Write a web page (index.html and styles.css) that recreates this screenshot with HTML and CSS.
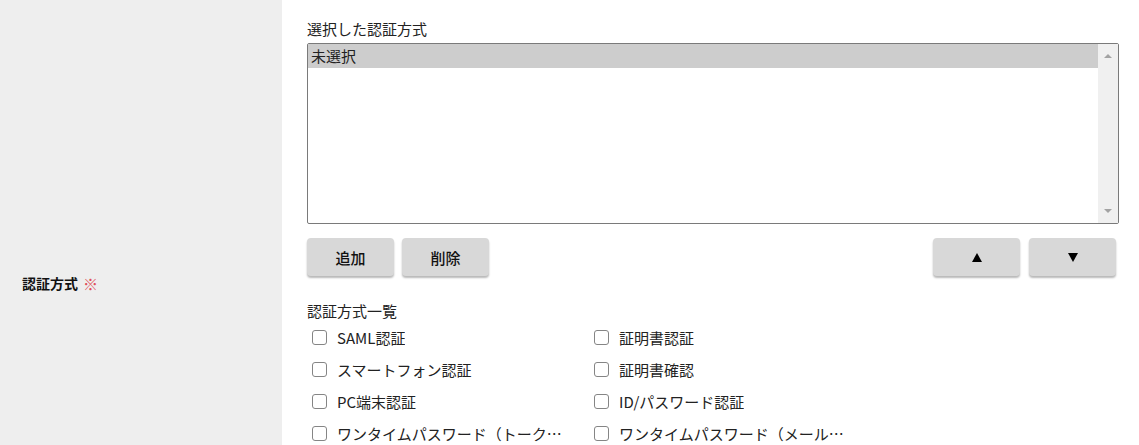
FILE: index.html
```html
<!DOCTYPE html>
<html lang="ja">
<head>
<meta charset="utf-8">
<title>認証方式</title>
<link rel="stylesheet" href="styles.css">
</head>
<body>
<div class="form-row">
  <div class="label-cell">
    <span class="label-text">認証方式</span><span class="required">※</span>
  </div>
  <div class="field-cell">
    <div class="field-title">選択した認証方式</div>
    <div class="listbox">
      <div class="options">
        <div class="option selected">未選択</div>
      </div>
      <div class="scrollbar">
        <span class="arrow up"></span>
        <span class="arrow down"></span>
      </div>
    </div>
    <div class="button-row">
      <div class="btn-group">
        <button class="btn">追加</button>
        <button class="btn">削除</button>
      </div>
      <div class="btn-group right">
        <button class="btn"><span class="tri up"></span></button>
        <button class="btn"><span class="tri down"></span></button>
      </div>
    </div>
    <div class="list-title">認証方式一覧</div>
    <div class="check-grid">
      <label class="check-item"><span class="box"></span><span class="check-text">SAML認証</span></label>
      <label class="check-item"><span class="box"></span><span class="check-text">証明書認証</span></label>
      <label class="check-item"><span class="box"></span><span class="check-text">スマートフォン認証</span></label>
      <label class="check-item"><span class="box"></span><span class="check-text">証明書確認</span></label>
      <label class="check-item"><span class="box"></span><span class="check-text">PC端末認証</span></label>
      <label class="check-item"><span class="box"></span><span class="check-text">ID/パスワード認証</span></label>
      <label class="check-item"><span class="box"></span><span class="check-text">ワンタイムパスワード（トークン）</span></label>
      <label class="check-item"><span class="box"></span><span class="check-text">ワンタイムパスワード（メール送信）</span></label>
    </div>
  </div>
</div>
</body>
</html>
```
FILE: styles.css
```css
html, body {
  margin: 0;
  padding: 0;
  background: #ffffff;
}
body {
  font-family: "Noto Sans CJK JP", "Noto Sans", sans-serif;
  color: #222222;
  font-size: 15px;
}
.form-row {
  display: flex;
  min-height: 566px;
}
.label-cell {
  width: 282px;
  flex: none;
  background: #eeeeee;
  display: flex;
  align-items: center;
  padding-left: 22px;
  box-sizing: border-box;
}
.label-text {
  font-weight: bold;
  font-size: 14px;
  color: #111111;
}
.required {
  color: #e0505a;
  font-size: 15px;
  margin-left: 5px;
}
.field-cell {
  flex: 1;
  padding: 18px 20px 0 25px;
}
.field-title {
  line-height: 22px;
  margin-bottom: 3px;
}
.listbox {
  height: 181px;
  border: 1px solid #7a7a7a;
  border-radius: 2px;
  box-sizing: border-box;
  display: flex;
}
.options {
  flex: 1;
}
.option {
  height: 24px;
  line-height: 24px;
  padding-left: 3px;
}
.option.selected {
  background: #cdcdcd;
}
.scrollbar {
  width: 20px;
  background: #f0f0f0;
  display: flex;
  flex-direction: column;
  justify-content: space-between;
  align-items: center;
  padding: 10px 0 10px;
}
.arrow {
  width: 0;
  height: 0;
  border-left: 4px solid transparent;
  border-right: 4px solid transparent;
}
.arrow.up {
  border-bottom: 4px solid #a3a3a3;
}
.arrow.down {
  border-top: 4px solid #a3a3a3;
}
.button-row {
  display: flex;
  justify-content: space-between;
  margin-top: 14px;
  padding-right: 3px;
}
.btn-group {
  display: flex;
  gap: 8px;
}
.btn-group.right {
  gap: 9px;
}
.btn {
  width: 87px;
  height: 38px;
  border: none;
  border-radius: 4px;
  background: #d8d8d8;
  box-shadow: 0 2px 2px rgba(0, 0, 0, 0.28);
  font-family: inherit;
  font-size: 15px;
  font-weight: 500;
  color: #111111;
  padding: 0;
  display: flex;
  align-items: center;
  justify-content: center;
}
.tri {
  width: 0;
  height: 0;
  border-left: 5px solid transparent;
  border-right: 5px solid transparent;
}
.tri.up {
  border-bottom: 9px solid #000000;
}
.tri.down {
  border-top: 9px solid #000000;
}
.list-title {
  margin-top: 25px;
  line-height: 20px;
}
.check-grid {
  display: grid;
  grid-template-columns: 282px 282px;
  padding-left: 5px;
}
.check-item {
  height: 32px;
  display: flex;
  align-items: center;
}
.box {
  width: 15px;
  height: 15px;
  box-sizing: border-box;
  border: 1.5px solid #858585;
  border-radius: 3px;
  background: #ffffff;
  flex: none;
}
.check-text {
  margin-left: 10px;
  max-width: 228px;
  white-space: nowrap;
  overflow: hidden;
  text-overflow: ellipsis;
}
```
